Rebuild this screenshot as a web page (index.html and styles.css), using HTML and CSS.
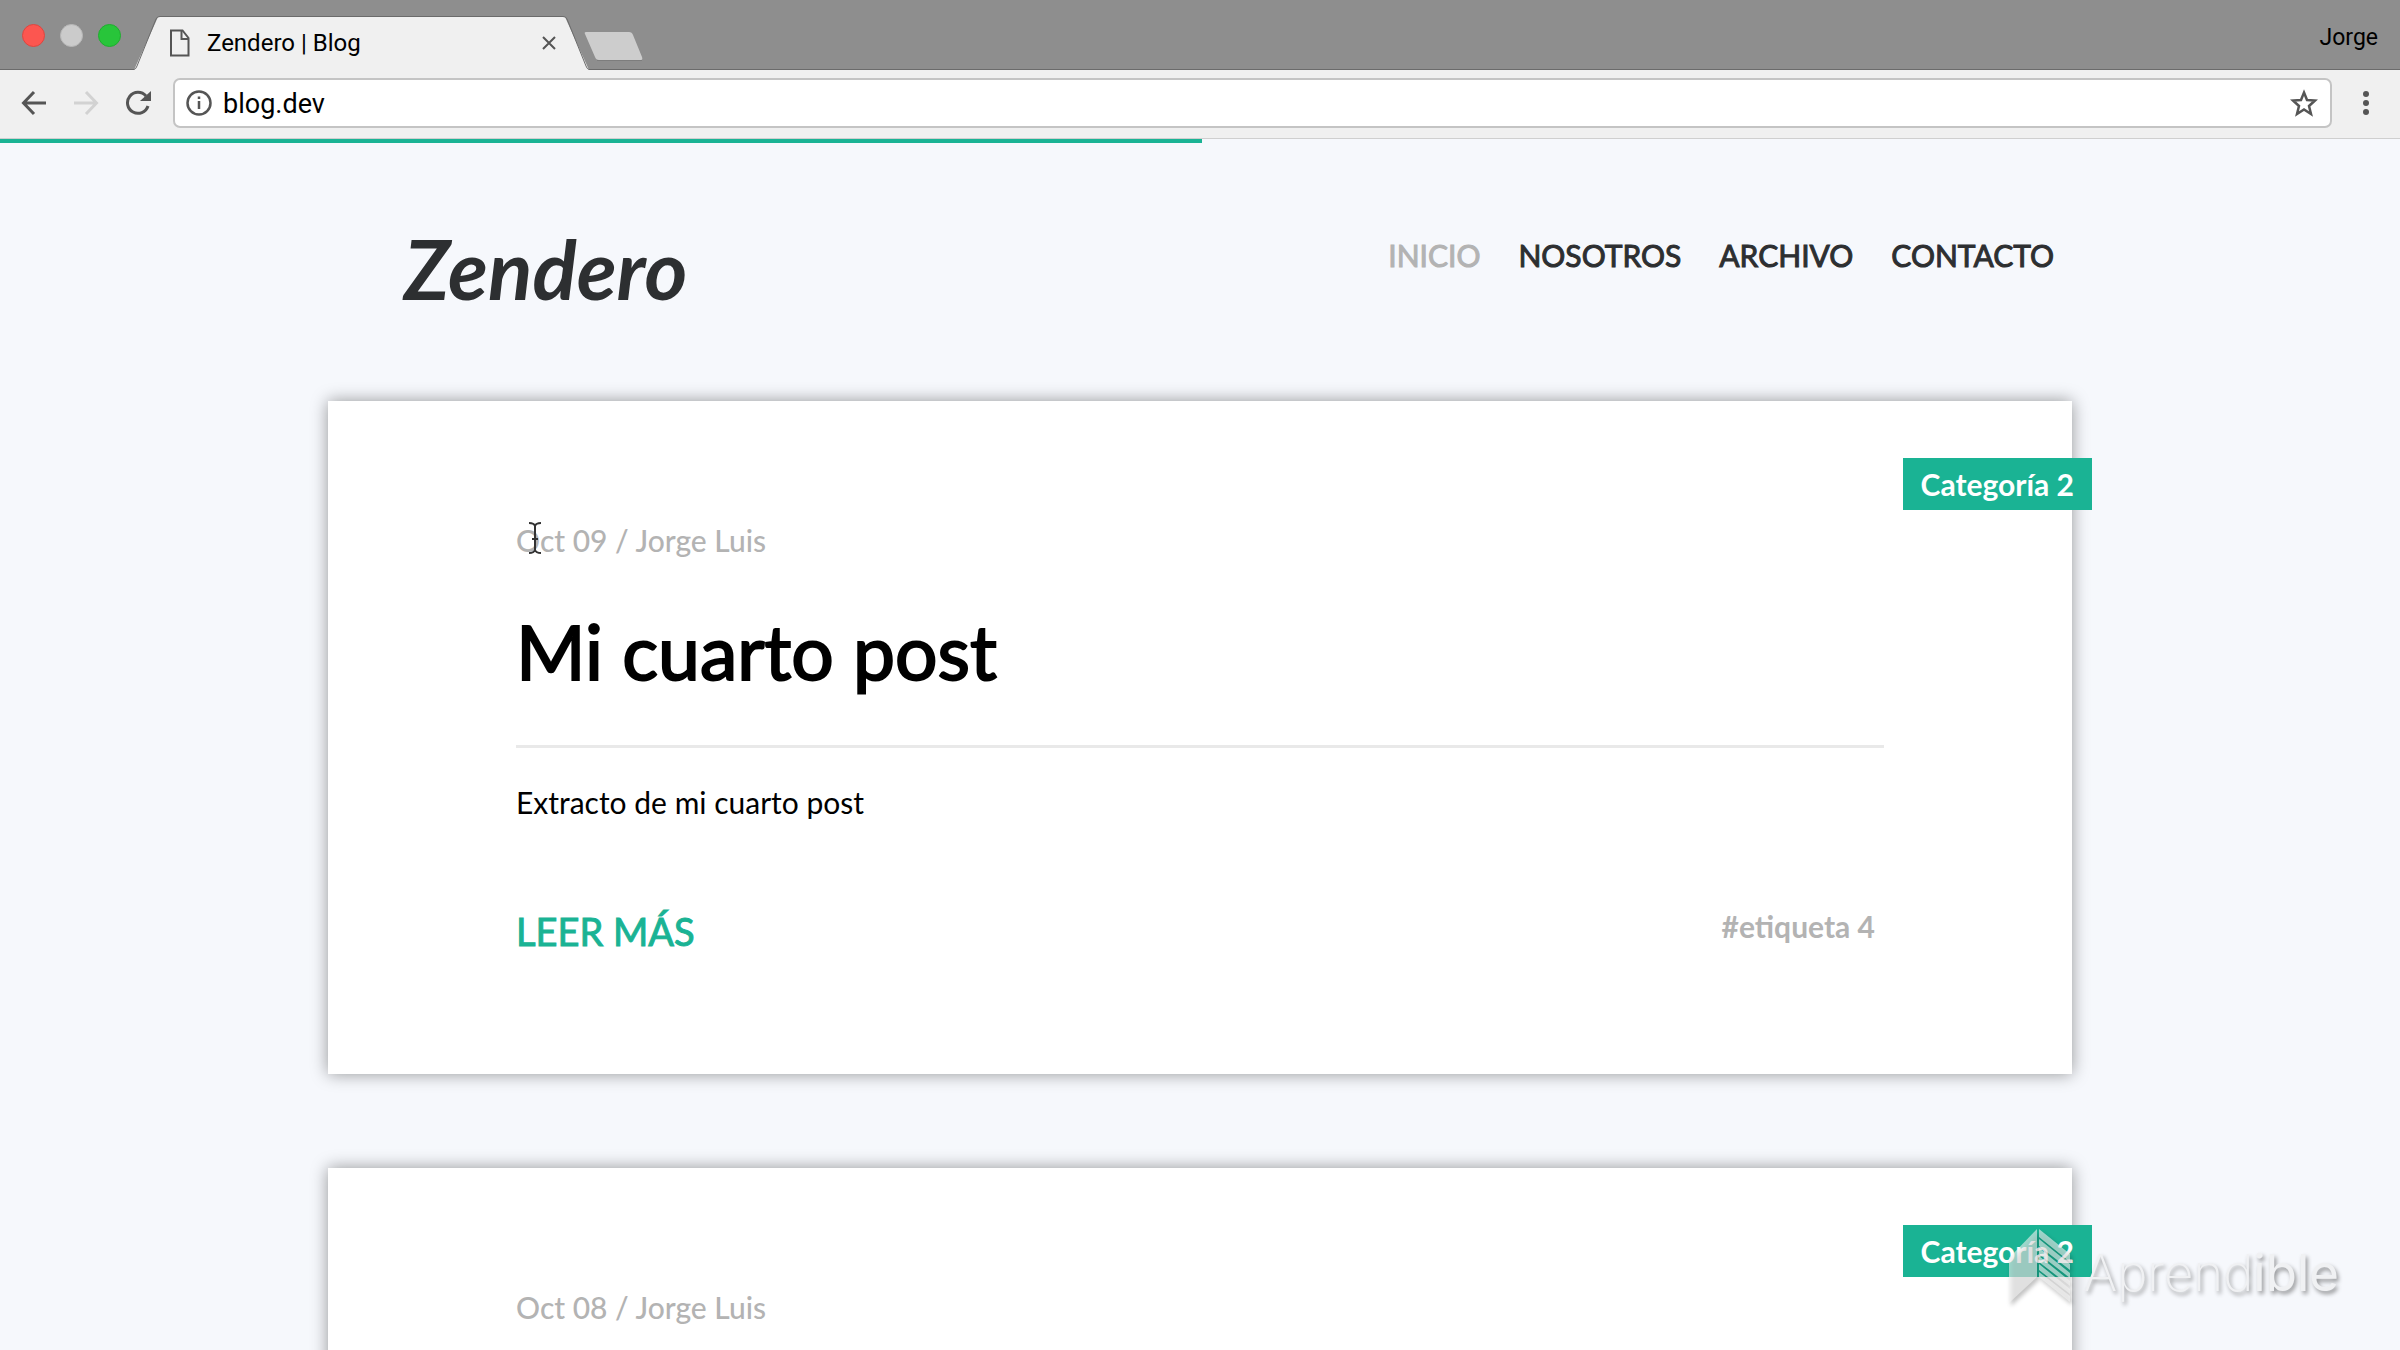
FILE: index.html
```html
<!DOCTYPE html>
<html lang="es">
<head>
    <meta charset="UTF-8">
    <meta name="viewport" content="width=device-width, initial-scale=1.0">
    <title>Zendero | Blog</title>
    <link rel="stylesheet" href="styles.css">
</head>
<body>

<div class="browser">
    <div class="tabbar">
        <div class="lights">
            <span class="light red"></span>
            <span class="light gray"></span>
            <span class="light green"></span>
        </div>
        <div class="tab">
            <svg class="tab-edge" width="26" height="54" viewBox="0 0 26 54"><path d="M0 54 24 1H26V54Z" fill="#f0f0f0"/><path d="M0 53.500 Q2 53 3 50L22 3Q23 .5 26 .5" fill="none" stroke="#6b6b6b"/></svg>
            <div class="tab-body">
                <svg width="20" height="28" viewBox="0 0 20 28" fill="none" stroke="#555" stroke-width="2"><path d="M1 1.500H12.500L18.500 9V26.500H1Z"/><path d="M11.500 2V10H18"/></svg>
                <span class="tab-title">Zendero | Blog</span>
                <button class="icon-btn" aria-label="Cerrar">
                    <svg width="16" height="16" viewBox="0 0 16 16" stroke="#555" stroke-width="2"><path d="M2 2 14 14M14 2 2 14"/></svg>
                </button>
            </div>
            <svg class="tab-edge" width="26" height="54" viewBox="0 0 26 54"><path d="M26 54 2 1H0V54Z" fill="#f0f0f0"/><path d="M26 53.500Q24 53 23 50L4 3Q3 .5 0 .5" fill="none" stroke="#6b6b6b"/></svg>
        </div>
        <button class="icon-btn new-tab" aria-label="Nueva pestaña">
            <svg width="62" height="30" viewBox="0 0 62 30"><path d="M2 2Q1 0 3 0H46Q49 0 50 3L59 25Q60 28 58 28H16Q13 28 12 25Z" fill="#cdcdcd"/><path d="M14 28.500H59" stroke="#7d7d7d"/></svg>
        </button>
        <span class="user">Jorge</span>
    </div>

    <div class="toolbar">
        <button class="icon-btn" aria-label="Atrás">
            <svg width="26" height="26" viewBox="0 0 26 26" fill="none" stroke="#555" stroke-width="3"><path d="M25 13H3M13 2 2.500 13 13 24"/></svg>
        </button>
        <button class="icon-btn" aria-label="Adelante">
            <svg width="26" height="26" viewBox="0 0 26 26" fill="none" stroke="#d2d2d2" stroke-width="3"><path d="M1 13H23M13 2 23.500 13 13 24"/></svg>
        </button>
        <button class="icon-btn" aria-label="Recargar">
            <svg width="26" height="26" viewBox="0 0 26 26"><path d="M21 6A10.500 10.500 0 1 0 23 16" fill="none" stroke="#555" stroke-width="3"/><path d="M26 1V11H15Z" fill="#555"/></svg>
        </button>
        <div class="address">
            <svg width="26" height="26" viewBox="0 0 26 26" fill="none" stroke="#555"><circle cx="13" cy="13" r="11.500" stroke-width="2.500"/><path d="M13 11V19M13 6.500V9" stroke-width="2.500"/></svg>
            <input type="text" class="url" value="blog.dev" aria-label="Dirección">
            <button class="icon-btn" aria-label="Añadir a favoritos">
                <svg width="28" height="28" viewBox="0 0 28 28" fill="none" stroke="#555" stroke-width="2.500"><path d="M14 3.500 17 11 25 11.500 19 17 21 25 14 20.500 7 25 9 17 3 11.500 11 11Z"/></svg>
            </button>
        </div>
        <button class="icon-btn" aria-label="Menú">
            <svg width="8" height="26" viewBox="0 0 8 26" fill="#555"><circle cx="4" cy="4" r="3"/><circle cx="4" cy="13" r="3"/><circle cx="4" cy="22" r="3"/></svg>
        </button>
    </div>
</div>

<div class="page">
    <div class="progress"></div>

    <header class="container header">
        <a href="#" class="logo">Zendero</a>
        <nav class="menu">
            <a href="#" class="active">Inicio</a>
            <a href="#">Nosotros</a>
            <a href="#">Archivo</a>
            <a href="#">Contacto</a>
        </nav>
    </header>

    <section class="container posts">
        <article class="post">
            <span class="category">Categoría 2</span>
            <div class="date">Oct 09 / Jorge Luis</div>
            <h1>Mi cuarto post</h1>
            <hr>
            <p>Extracto de mi cuarto post</p>
            <footer class="post-footer">
                <a href="#" class="read-more">Leer más</a>
                <span class="tag">#etiqueta 4</span>
            </footer>
        </article>
        <article class="post">
            <span class="category">Categoría 2</span>
            <div class="date">Oct 08 / Jorge Luis</div>
        </article>
    </section>
</div>

<svg class="cursor" width="14" height="32" viewBox="0 0 14 32" fill="none" stroke="#333" stroke-width="2"><path d="M1 1Q6 1 7 4Q8 1 13 1M7 4V28M1 31Q6 31 7 28Q8 31 13 31M4 17H10"/></svg>

<div class="watermark">
    <svg width="64" height="78" viewBox="0 0 64 78" fill="#f4f4f4">
        <path d="M29 1V49L1 75V30Z" opacity=".6"/>
        <path d="M31 1 62 26V34L31 9ZM31 11 62 36V42L31 18ZM31 20 62 45V50L31 26ZM31 28 62 53V58L31 34ZM31 36 62 61V66L31 42ZM31 44 62 68V74L31 49Z" opacity=".6"/>
    </svg>
    <span class="brand">Aprend<b>ible</b></span>
</div>

</body>
</html>
```

FILE: styles.css
```css
:root {
    --accent: #1ab394;
    --page-bg: #f6f8fc;
    --chrome-bg: #f0f0f0;
    --muted: #b3b3b3;
    --dark: #2d2f31;
}

* {
    box-sizing: border-box;
}

body {
    margin: 0;
    height: 100vh;
    display: flex;
    flex-direction: column;
    overflow: hidden;
    position: relative;
    background: var(--page-bg);
    font-family: Lato, sans-serif;
    font-size: 30px;
}

a {
    color: inherit;
    text-decoration: none;
}

.icon-btn {
    background: none;
    border: none;
    padding: 0;
    display: flex;
    cursor: pointer;
}

/* browser */
.browser {
    font-family: Roboto, sans-serif;
    background: var(--chrome-bg);
    border-bottom: 1px solid #cfcfcf;
}

.tabbar {
    display: flex;
    align-items: flex-end;
    height: 70px;
    padding: 0 22px;
    background: linear-gradient(#8e8e8e 69px, #6b6b6b 69px);
}

.lights {
    display: flex;
    gap: 15px;
    align-self: center;
    width: 112px;
}

.light {
    width: 23px;
    height: 23px;
    border-radius: 50%;
}

.red {
    background: #fc5650;
    border: 1px solid #dd4640;
}

.gray {
    background: #cbcbcb;
    border: 1px solid #b8b8b8;
}

.green {
    background: #28c53a;
    border: 1px solid #1fae2f;
}

.tab {
    display: flex;
}

.tab-edge {
    display: block;
}

.tab-body {
    display: flex;
    align-items: center;
    width: 403px;
    padding: 0 6px 2px 10px;
    background: var(--chrome-bg);
    border-top: 1px solid #6b6b6b;
}

.tab-title {
    flex: 1;
    padding-left: 17px;
    font-size: 24px;
}

.new-tab {
    margin: 0 0 8px -6px;
}

.user {
    margin-left: auto;
    padding-top: 4px;
    align-self: center;
    font-size: 23px;
}

.toolbar {
    display: flex;
    align-items: center;
    gap: 26px;
    padding: 8px 30px 10px 21px;
}

.address {
    flex: 1;
    display: flex;
    align-items: center;
    height: 50px;
    margin: 0 4px 0 -4px;
    padding: 0 12px 0 11px;
    background: #fff;
    border: 2px solid #c4c4c4;
    border-radius: 7px;
}

.url {
    flex: 1;
    border: none;
    outline: none;
    background: none;
    padding: 2px 0 0 11px;
    font-family: inherit;
    font-size: 27px;
    color: #000;
}

/* blog */
.page {
    flex: 1;
    min-height: 0;
    overflow: hidden;
}

.progress {
    width: 50.1%;
    height: 4px;
    background: var(--accent);
}

.container {
    width: 73%;
    max-width: 1744px;
    margin: 0 auto;
}

.header {
    display: flex;
    justify-content: space-between;
    align-items: flex-start;
    height: 258px;
    padding: 76px 18px 0 76px;
}

.logo {
    font-size: 82px;
    line-height: 98px;
    font-weight: 700;
    font-style: italic;
    color: var(--dark);
}

.menu {
    display: flex;
    gap: 38px;
    padding-top: 17px;
    line-height: 38px;
    -webkit-text-stroke: 1px currentColor;
    text-transform: uppercase;
    color: var(--dark);
}

.menu .active {
    color: var(--muted);
}

.posts {
    display: flex;
    flex-direction: column;
    gap: 94px;
}

.post {
    position: relative;
    min-height: 673px;
    padding: 120px 188px 0;
    background: #fff;
    box-shadow: 0 0 16px rgba(0, 0, 0, 0.4);
}

.category {
    position: absolute;
    top: 57px;
    right: -20px;
    padding: 7px 18px;
    line-height: 38px;
    background: var(--accent);
    color: #fff;
    font-weight: 700;
}

.date {
    line-height: 38px;
    font-weight: 500;
    color: var(--muted);
}

h1 {
    margin: 40px 0 42px;
    font-size: 75px;
    line-height: 104px;
    font-weight: 400;
    -webkit-text-stroke: 2px currentColor;
}

hr {
    height: 3px;
    margin: 0;
    border: none;
    background: #e9e9e9;
}

p {
    margin: 35px 0 0;
    line-height: 38px;
}

.post-footer {
    display: flex;
    justify-content: space-between;
    margin-top: 86px;
    padding-right: 9px;
}

.read-more {
    font-size: 38px;
    line-height: 48px;
    -webkit-text-stroke: 1px currentColor;
    text-transform: uppercase;
    color: var(--accent);
}

.tag {
    line-height: 38px;
    font-weight: 700;
    color: var(--muted);
}

/* overlays */
.cursor {
    position: absolute;
    left: 528px;
    top: 522px;
}

.watermark {
    position: absolute;
    right: 61px;
    bottom: 44px;
    display: flex;
    align-items: flex-end;
    gap: 12px;
    filter: drop-shadow(2px 3px 2px rgba(0, 0, 0, 0.4));
}

.brand {
    font-family: Inter, sans-serif;
    font-size: 51px;
    line-height: 66px;
    font-weight: 200;
    color: #f0f1f3;
}

.brand b {
    font-weight: 400;
}
```
